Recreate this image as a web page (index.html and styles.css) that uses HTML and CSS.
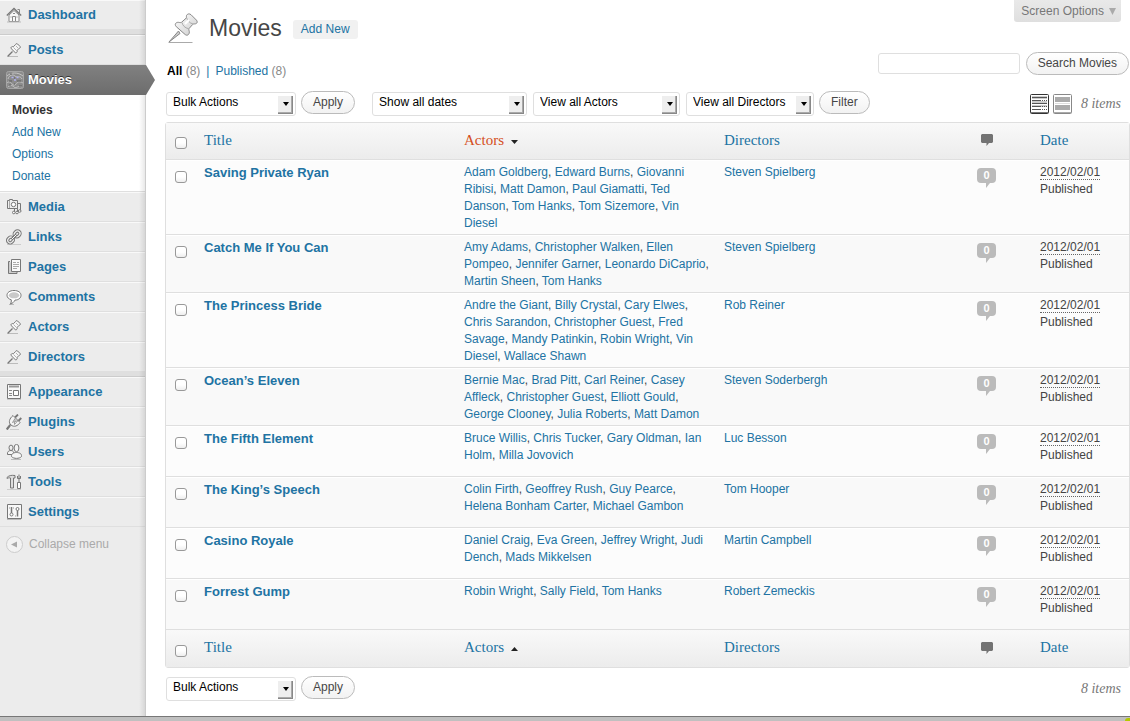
FILE: index.html
```html
<!DOCTYPE html>
<html lang="en">
<head>
<meta charset="utf-8">
<title>Movies</title>
<link rel="stylesheet" href="styles.css">
</head>
<body>
<svg class="defs" aria-hidden="true">
  <defs>
    <linearGradient id="metal" x1="0" y1="0" x2="1" y2="1"><stop offset="0" stop-color="#fff"/><stop offset="1" stop-color="#ccc"/></linearGradient>
    <symbol id="pin" viewBox="0 0 30 30">
      <path d="M.5 29.500h24" stroke="#aaa" stroke-width="1"/>
      <path d="M10.500 18 1 29l11-8.500z" fill="#ccc" stroke="#888"/>
      <path d="M18.500 2.500c1-2 3-2 4.500-.8l5.500 5.500c1.200 1.500.8 3.200-1 3.600-1.200.3-2-.2-3 .8l-3.500 4c-.6 1 .6 2.500.3 4.200-.5 2.300-2.500 3.200-4.300 1.600L8.300 13.700c-1.700-1.700-1.200-3.800 1-4.300 1.700-.3 3.200.6 4.200-.1l4.500-4c.8-.8.2-1.600.5-2.800z" fill="url(#metal)" stroke="#888"/>
      <path d="M14 9.500c.5 3 3 5.500 6.500 6.200M18.500 4.500c1 3 3 5.500 6.500 6.500" fill="none" stroke="#aaa"/>
      <path d="m17 11 4-4" stroke="#fff" stroke-width="2"/>
    </symbol>
    <symbol id="pin-small" viewBox="0 0 14 14">
      <path d="M0 13.500h11" stroke="#bbb"/>
      <path d="M5.500 8.500 .8 13.200" stroke="#777" stroke-width="1.300"/>
      <path d="M8.600 1.500c.3-1 1.300-1.200 2-.5l2.500 2.500c.6.7.2 1.600-.8 1.700L10.200 7.300c.3 1.500-.5 3-1.900 2.400L4.100 5.500c-.6-1.400.9-2.200 2.400-1.900z" fill="#f6f6f6" stroke="#777"/>
      <path d="M6.500 4.500 9.500 7.500M9 3l2 2" stroke="#999" stroke-width=".7"/>
    </symbol>
    <symbol id="bubble" viewBox="0 0 12 12"><path d="M1 0h10l1 1v7l-1 1H8l-2.500 3V9H1L0 8V1z" fill="#737373"/></symbol>
  </defs>
</svg>
<div class="page">
  <nav class="menu" aria-label="Main menu">
    <ul class="menu-list">
      <li class="item"><a href="#"><svg class="icon" viewBox="0 0 16 16"><path d="M3 8v6.500h10V8L8 3.500z" fill="#f8f8f8" stroke="#888"/><path d="M.8 8.500 8 1.500l7.200 7" fill="none" stroke="#777" stroke-width="1.300"/><path d="M11.500 2.500h2v4" fill="none" stroke="#888"/><path d="M6.500 14.500v-5h3v5M4.500 10h1M10.500 10h1M7 6.500h2" fill="none" stroke="#888"/><path d="M1 15h14" stroke="#bbb"/></svg>Dashboard</a></li>
      <li class="separator"></li>
      <li class="item"><a href="#"><svg class="icon small"><use href="#pin-small"/></svg>Posts</a></li>
      <li class="item current"><a href="#"><svg class="icon movie" viewBox="0 0 18 18"><rect x=".5" y=".5" width="17" height="17" rx="2" fill="#8c8c8c" stroke="#a5a5a5"/><path d="M1 5c4-4 11-4 16 0M2 8c1-4 5-5 7-3s5-1 7 3M1 12c2-2 4-1 5 1s4 1 5-1 4-1 6 0M2 16c2-2 4-2 6 0s5-2 8 0" fill="none" stroke="#c4c4c4"/><path d="M5.500 6.500h2M10.500 6.500h2M8 9h2" stroke="#b0b0f0" stroke-width="1.500"/><path d="M3 10h3M11 10h4M3 14h2M8 13h1M13 15h3M4 3h2M8 7h1" stroke="#5e5e5e"/></svg>Movies</a>
        <ul class="submenu">
          <li><a class="active" href="#">Movies</a></li>
          <li><a href="#">Add New</a></li>
          <li><a href="#">Options</a></li>
          <li><a href="#">Donate</a></li>
        </ul>
      </li>
      <li class="item"><a href="#"><svg class="icon" viewBox="0 0 16 16"><path d="M1.500 1.500h2v-1h3v1h5v8h-10z" fill="#eee" stroke="#777"/><path d="M3.500 2v7" stroke="#aaa"/><circle cx="7.500" cy="5.500" r="2.200" fill="#fff" stroke="#777"/><path d="M8.500 13.500V9.500h3v4M11.500 4.500h3v8" fill="none" stroke="#777"/><circle cx="7.800" cy="13.500" r="1.300" fill="#fff" stroke="#777"/><circle cx="11" cy="13.500" r="1.300" fill="#fff" stroke="#777"/><circle cx="13.700" cy="12" r="1.300" fill="#fff" stroke="#777"/></svg>Media</a></li>
      <li class="item"><a href="#"><svg class="icon" viewBox="0 0 16 16"><path d="M1 15.500h14" stroke="#ccc"/><g fill="none" stroke="#777" stroke-width="3.400"><rect x="8.500" y="1.800" width="5" height="6" rx="2.500" transform="rotate(45 11 5)"/><rect x="2" y="8" width="5" height="6" rx="2.500" transform="rotate(45 4.500 11)"/></g><g fill="none" stroke="#eee" stroke-width="1.300"><rect x="8.500" y="1.800" width="5" height="6" rx="2.500" transform="rotate(45 11 5)"/><rect x="2" y="8" width="5" height="6" rx="2.500" transform="rotate(45 4.500 11)"/></g><path d="m5.500 10.500 5-5" stroke="#777" stroke-width="2.600"/><path d="m5.500 10.500 5-5" stroke="#fff"/></svg>Links</a></li>
      <li class="item"><a href="#"><svg class="icon" viewBox="0 0 16 16"><path d="M4 2.500H2.500v12H11V13" fill="#ccc" stroke="#777"/><path d="M5.500.5h9v12h-9z" fill="#fafafa" stroke="#777"/><path d="M7 3.500h3M11 3.500h2M7 5.500h6M7 7.500h6M7 9.500h4" stroke="#aaa"/></svg>Pages</a></li>
      <li class="item"><a href="#"><svg class="icon" viewBox="0 0 16 16"><path d="M3 15.500h5" stroke="#bbb"/><path d="M8 1.500c4.300 0 7 2 7 4.800s-2.700 4.800-6 4.800c-1 1.900-2.500 3.300-4.500 3.900.7-1.200 1-2.700.8-4.200C2.700 10 1 8.500 1 6.300c0-2.800 2.700-4.800 7-4.800z" fill="#fff" stroke="#777"/><ellipse cx="8" cy="6.300" rx="5.200" ry="3" fill="#c9c9c9"/></svg>Comments</a></li>
      <li class="item"><a href="#"><svg class="icon small"><use href="#pin-small"/></svg>Actors</a></li>
      <li class="item"><a href="#"><svg class="icon small"><use href="#pin-small"/></svg>Directors</a></li>
      <li class="separator"></li>
      <li class="item"><a href="#"><svg class="icon" viewBox="0 0 16 16"><path d="M1.500.5h13v14h-13z" fill="#f8f8f8" stroke="#777"/><path d="M3 2.500h10" stroke="#999" stroke-width="2"/><path d="M7.500 6.500h5v5h-5z" fill="#fff" stroke="#777"/><path d="M3 6.500h3M3 9.500h3M3 11.500h3" stroke="#888"/><path d="M1 15.500h14" stroke="#ccc"/></svg>Appearance</a></li>
      <li class="item"><a href="#"><svg class="icon" viewBox="0 0 16 16"><path d="M4.500 11C3 11.500 3.500 13 2.200 13.500L.8 15.500" fill="none" stroke="#777" stroke-width="2.200"/><path d="m9 3.500 3-3M12.300 7l3-3" stroke="#777" stroke-width="1.800"/><path d="M7 1.500 14 8.500C12 12 8 13.500 5 11S3.500 4.500 7 1.500z" fill="#f4f4f4" stroke="#777"/><path d="M6.500 8.500 9 4.500v3l3-1-3.500 4v-3z" stroke="#888" stroke-width=".8" fill="none"/><path d="M4 15.500h9" stroke="#ccc"/></svg>Plugins</a></li>
      <li class="item"><a href="#"><svg class="icon" viewBox="0 0 16 16"><ellipse cx="5" cy="3.800" rx="2" ry="2.700" fill="#eee" stroke="#777"/><path d="M1.500 10.500C1 7.500 3 6.500 5 6.500s3 1.500 3 4z" fill="#f5f5f5" stroke="#777"/><ellipse cx="10.500" cy="4" rx="2.400" ry="3.700" fill="#f4f4f4" stroke="#777"/><path d="M5.500 12.500c-.5-2.700 2-4 5-4s5.700 1.500 5 4c-2 2.500-8 2.500-10 0z" fill="#f5f5f5" stroke="#777"/><path d="M5 15.500h10" stroke="#bbb"/></svg>Users</a></li>
      <li class="item"><a href="#"><svg class="icon" viewBox="0 0 16 16"><path d="M1 3.500C3 1.500 5 1 9 1.500v2.500H7.500v10h-3V4C3 3.500 2 4 1 4.500z" fill="#ddd" stroke="#777"/><path d="M13 .5v8M11.500 2v2.500h3V2" fill="none" stroke="#777"/><path d="M11.500 8.500h3v6h-3z" fill="#fff" stroke="#777"/><path d="M1 15.500h14" stroke="#ccc"/></svg>Tools</a></li>
      <li class="item"><a href="#"><svg class="icon" viewBox="0 0 16 16"><path d="M1.500.5h14v14h-14z" fill="#f8f8f8" stroke="#777"/><path d="M5.500 3v6" stroke="#777" stroke-width="1.500"/><circle cx="5.500" cy="10.500" r="1.500" fill="#fff" stroke="#777"/><circle cx="11.500" cy="5" r="1.500" fill="#fff" stroke="#777"/><path d="M11.500 6.500v6" stroke="#777" stroke-width="1.500"/><path d="M3 4h1M7 4h1M9 12h1" stroke="#999"/><path d="M1 15.500h14" stroke="#bbb"/></svg>Settings</a></li>
    </ul>
    <button class="collapse" type="button"><svg class="icon collapse-icon" viewBox="0 0 17 17"><circle cx="8.500" cy="8.500" r="8" fill="#f3f3f3" stroke="#ccc"/><path d="M11 5.500v6l-6-3z" fill="#aaa"/></svg>Collapse menu</button>
  </nav>

  <main class="content">
    <header class="heading">
      <svg class="heading-icon"><use href="#pin"/></svg>
      <h1>Movies</h1>
      <a class="add-new" href="#">Add New</a>
      <button class="screen-options" type="button">Screen Options <svg width="7" height="7" viewBox="0 0 7 7"><path d="M0 0h7L3.500 7z" fill="#aaa"/></svg></button>
    </header>

    <div class="views-row">
      <ul class="views">
        <li><a class="active" href="#">All</a> <span>(8)</span></li>
        <li class="bar">|</li>
        <li><a href="#">Published</a> <span>(8)</span></li>
      </ul>
      <form class="search">
        <input type="text" aria-label="Search Movies">
        <button class="button" type="button">Search Movies</button>
      </form>
    </div>

    <div class="tablenav">
      <span class="select bulk"><select aria-label="Bulk Actions"><option>Bulk Actions</option></select></span>
      <button class="button apply" type="button">Apply</button>
      <span class="select dates"><select aria-label="Dates"><option>Show all dates</option></select></span>
      <span class="select actors"><select aria-label="Actors"><option>View all Actors</option></select></span>
      <span class="select directors"><select aria-label="Directors"><option>View all Directors</option></select></span>
      <button class="button filter" type="button">Filter</button>
      <div class="nav-end">
        <button class="mode" type="button" aria-label="List view"><svg viewBox="0 0 19 20"><rect x=".5" y=".5" width="18" height="19" rx="1" fill="#fff" stroke="#333"/><path d="M1 18.500h17" stroke="#777"/><path d="M2 2h15v3H2zM2 7h15v2H2zM2 11h15v2H2z" fill="#ccc"/><path d="M2 3.500h15M2 6.500h9M2 9.500h15M2 12.500h9M2 15.500h9" stroke="#555"/><path d="M12 6.500h5M12 12.500h5M12 15.500h5" stroke="#555" stroke-dasharray="1 1"/></svg></button>
        <button class="mode" type="button" aria-label="Excerpt view"><svg viewBox="0 0 19 20"><rect x=".5" y=".5" width="18" height="19" rx="1" fill="#fff" stroke="#888"/><path d="M1 18.500h17" stroke="#aaa"/><path d="M2 3h15v5H2zM2 11h15v5H2z" fill="#aaa"/><path d="M2 9.500h15" stroke="#ddd"/></svg></button>
        <span class="count">8 items</span>
      </div>
    </div>

    <table class="movies">
      <colgroup><col class="c-check"><col class="c-title"><col class="c-actors"><col><col class="c-comments"><col class="c-date"></colgroup>
      <thead>
        <tr><th class="check"><input type="checkbox" aria-label="Select all"></th><th><a href="#">Title</a></th><th><a class="sorted" href="#">Actors</a><svg class="sort" viewBox="0 0 7 4"><path d="M0 0h7L3.500 4z"/></svg></th><th><a href="#">Directors</a></th><th class="num"><svg class="head-bubble" role="img" aria-label="Comments"><use href="#bubble"/></svg></th><th><a href="#">Date</a></th></tr>
      </thead>
      <tbody>
        <tr><td class="check"><input type="checkbox" aria-label="Select Saving Private Ryan"></td><td><a class="title" href="#">Saving Private Ryan</a></td><td><a href="#">Adam Goldberg</a>, <a href="#">Edward Burns</a>, <a href="#">Giovanni Ribisi</a>, <a href="#">Matt Damon</a>, <a href="#">Paul Giamatti</a>, <a href="#">Ted Danson</a>, <a href="#">Tom Hanks</a>, <a href="#">Tom Sizemore</a>, <a href="#">Vin Diesel</a></td><td><a href="#">Steven Spielberg</a></td><td class="num"><a class="comments" href="#">0</a></td><td><abbr>2012/02/01</abbr><br>Published</td></tr>
        <tr><td class="check"><input type="checkbox" aria-label="Select Catch Me If You Can"></td><td><a class="title" href="#">Catch Me If You Can</a></td><td><a href="#">Amy Adams</a>, <a href="#">Christopher Walken</a>, <a href="#">Ellen Pompeo</a>, <a href="#">Jennifer Garner</a>, <a href="#">Leonardo DiCaprio</a>, <a href="#">Martin Sheen</a>, <a href="#">Tom Hanks</a></td><td><a href="#">Steven Spielberg</a></td><td class="num"><a class="comments" href="#">0</a></td><td><abbr>2012/02/01</abbr><br>Published</td></tr>
        <tr><td class="check"><input type="checkbox" aria-label="Select The Princess Bride"></td><td><a class="title" href="#">The Princess Bride</a></td><td><a href="#">Andre the Giant</a>, <a href="#">Billy Crystal</a>, <a href="#">Cary Elwes</a>, <a href="#">Chris Sarandon</a>, <a href="#">Christopher Guest</a>, <a href="#">Fred Savage</a>, <a href="#">Mandy Patinkin</a>, <a href="#">Robin Wright</a>, <a href="#">Vin Diesel</a>, <a href="#">Wallace Shawn</a></td><td><a href="#">Rob Reiner</a></td><td class="num"><a class="comments" href="#">0</a></td><td><abbr>2012/02/01</abbr><br>Published</td></tr>
        <tr><td class="check"><input type="checkbox" aria-label="Select Ocean’s Eleven"></td><td><a class="title" href="#">Ocean’s Eleven</a></td><td><a href="#">Bernie Mac</a>, <a href="#">Brad Pitt</a>, <a href="#">Carl Reiner</a>, <a href="#">Casey Affleck</a>, <a href="#">Christopher Guest</a>, <a href="#">Elliott Gould</a>, <a href="#">George Clooney</a>, <a href="#">Julia Roberts</a>, <a href="#">Matt Damon</a></td><td><a href="#">Steven Soderbergh</a></td><td class="num"><a class="comments" href="#">0</a></td><td><abbr>2012/02/01</abbr><br>Published</td></tr>
        <tr><td class="check"><input type="checkbox" aria-label="Select The Fifth Element"></td><td><a class="title" href="#">The Fifth Element</a></td><td><a href="#">Bruce Willis</a>, <a href="#">Chris Tucker</a>, <a href="#">Gary Oldman</a>, <a href="#">Ian Holm</a>, <a href="#">Milla Jovovich</a></td><td><a href="#">Luc Besson</a></td><td class="num"><a class="comments" href="#">0</a></td><td><abbr>2012/02/01</abbr><br>Published</td></tr>
        <tr><td class="check"><input type="checkbox" aria-label="Select The King’s Speech"></td><td><a class="title" href="#">The King’s Speech</a></td><td><a href="#">Colin Firth</a>, <a href="#">Geoffrey Rush</a>, <a href="#">Guy Pearce</a>, <a href="#">Helena Bonham Carter</a>, <a href="#">Michael Gambon</a></td><td><a href="#">Tom Hooper</a></td><td class="num"><a class="comments" href="#">0</a></td><td><abbr>2012/02/01</abbr><br>Published</td></tr>
        <tr><td class="check"><input type="checkbox" aria-label="Select Casino Royale"></td><td><a class="title" href="#">Casino Royale</a></td><td><a href="#">Daniel Craig</a>, <a href="#">Eva Green</a>, <a href="#">Jeffrey Wright</a>, <a href="#">Judi Dench</a>, <a href="#">Mads Mikkelsen</a></td><td><a href="#">Martin Campbell</a></td><td class="num"><a class="comments" href="#">0</a></td><td><abbr>2012/02/01</abbr><br>Published</td></tr>
        <tr><td class="check"><input type="checkbox" aria-label="Select Forrest Gump"></td><td><a class="title" href="#">Forrest Gump</a></td><td><a href="#">Robin Wright</a>, <a href="#">Sally Field</a>, <a href="#">Tom Hanks</a></td><td><a href="#">Robert Zemeckis</a></td><td class="num"><a class="comments" href="#">0</a></td><td><abbr>2012/02/01</abbr><br>Published</td></tr>
      </tbody>
      <tfoot>
        <tr><th class="check"><input type="checkbox" aria-label="Select all"></th><th><a href="#">Title</a></th><th><a href="#">Actors</a><svg class="sort" viewBox="0 0 7 4"><path d="M0 4h7L3.500 0z"/></svg></th><th><a href="#">Directors</a></th><th class="num"><svg class="head-bubble" role="img" aria-label="Comments"><use href="#bubble"/></svg></th><th><a href="#">Date</a></th></tr>
      </tfoot>
    </table>

    <div class="tablenav bottom">
      <span class="select bulk"><select aria-label="Bulk Actions"><option>Bulk Actions</option></select></span>
      <button class="button apply" type="button">Apply</button>
      <div class="nav-end"><span class="count">8 items</span></div>
    </div>
  </main>
</div>
<div class="statusbar"><span class="status-dot"></span></div>
</body>
</html>
```
FILE: styles.css
```css
* { box-sizing: border-box; }
body {
  margin: 0;
  min-height: 100vh;
  display: flex;
  flex-direction: column;
  background: #fff;
  color: #444;
  font: 12px/17px "Liberation Sans", Arial, sans-serif;
}
a { color: #2173a3; text-decoration: none; }
ul { list-style: none; margin: 0; padding: 0; }
button, input, select { font: inherit; color: inherit; margin: 0; }
button { cursor: pointer; }
svg { display: block; flex: none; }
.defs { position: absolute; width: 0; height: 0; }
.page { flex: 1; display: flex; }

/* Sidebar */
.menu {
  position: relative;
  flex: none;
  width: 146px;
  background: #ececec;
  border-right: 1px solid #ccc;
}
.menu::after {
  content: "";
  position: absolute;
  inset: 0 0 0 auto;
  width: 6px;
  background: linear-gradient(to right, rgba(0,0,0,0), rgba(0,0,0,.09));
  pointer-events: none;
}
.item > a {
  display: flex;
  align-items: center;
  gap: 6px;
  height: 30px;
  padding: 0 0 2px 6px;
  border-top: 1px solid #f9f9f9;
  border-bottom: 1px solid #dfdfdf;
  font-size: 13px;
  font-weight: bold;
}
.icon { width: 16px; height: 16px; margin-top: 2px; }
.icon.small { width: 14px; height: 14px; margin-left: 1px; margin-right: 1px; }
.separator {
  height: 5px;
  background: #dfdfdf;
  border-bottom: 1px solid #ccc;
}
.item.current > a {
  position: relative;
  z-index: 1;
  gap: 4px;
  border-color: #808080 #6d6d6d #6d6d6d;
  background: linear-gradient(#808080, #6d6d6d);
  color: #fff;
  text-shadow: 0 -1px 0 #333;
}
.item.current > a::after {
  content: "";
  position: absolute;
  top: -1px;
  left: 100%;
  width: 10px;
  height: 30px;
  background: linear-gradient(#808080, #6d6d6d);
  clip-path: polygon(0 0, 10% 0, 100% 50%, 10% 100%, 0 100%);
}
.icon.movie { width: 18px; height: 18px; }
.submenu {
  padding: 4px 0;
  background: #fff;
  border-bottom: 1px solid #dfdfdf;
}
.submenu a { display: block; padding-left: 12px; line-height: 22px; }
.submenu .active { color: #333; font-weight: bold; }
.collapse {
  display: flex;
  align-items: center;
  gap: 6px;
  height: 34px;
  padding: 0 0 0 6px;
  border: 0;
  background: none;
  color: #aaa;
}
.icon.collapse-icon { width: 17px; height: 17px; margin-top: 0; }

/* Heading */
.content { flex: 1; min-width: 0; padding-left: 19px; }
.heading { display: flex; align-items: flex-start; height: 43px; padding-left: 3px; }
.heading-icon { width: 30px; height: 30px; margin-top: 13px; }
h1 {
  margin: 13px 11px 0;
  font-size: 23px;
  font-weight: normal;
  line-height: 30px;
  color: #464646;
}
.add-new {
  margin-top: 20px;
  padding: 0 8px;
  line-height: 19px;
  border-radius: 3px;
  background: #f1f1f1;
}
.screen-options {
  display: flex;
  align-items: center;
  gap: 5px;
  height: 22px;
  margin: 0 9px 0 auto;
  padding: 0 5px 0 7px;
  border: 0;
  border-radius: 0 0 3px 3px;
  background: linear-gradient(#e9e9e9, #dfdfdf);
  color: #777;
}

/* View links and search */
.views-row {
  display: flex;
  align-items: center;
  justify-content: space-between;
  margin-top: 9px;
}
.views { display: flex; gap: 6px; padding: 16px 0 0 2px; height: 23px; align-items: center; }
.views span { color: #888; }
.views .active { color: #000; font-weight: bold; }
.views .bar { color: #2173a3; }
.search { display: flex; align-items: center; gap: 6px; padding-right: 1px; }
.search input {
  width: 142px;
  height: 21px;
  border: 1px solid #dfdfdf;
  border-radius: 3px;
  background: #fff;
}
.button {
  height: 23px;
  padding: 0 11px;
  border: 1px solid #bbb;
  border-radius: 12px;
  background: linear-gradient(#fff, #f2f2f2);
  color: #464646;
  line-height: 19px;
  white-space: nowrap;
}

/* Table toolbar */
.tablenav { display: flex; align-items: flex-start; margin: 16px 0 6px; padding-left: 1px; }
.tablenav.bottom { margin: 8px 0 15px; }
.select { position: relative; margin-top: 1px; }
.select select {
  display: block;
  width: 100%;
  height: 24px;
  padding: 0 20px 4px 6px;
  border: 1px solid #dfdfdf;
  border-radius: 3px;
  background: #fff;
  color: #000;
  appearance: none;
}
.select::before {
  content: "";
  position: absolute;
  top: 4px;
  right: 3px;
  width: 14px;
  height: 17px;
  background: #eee;
  border: solid #888;
  border-width: 0 1px 1px 0;
  box-shadow: inset -1px -1px #aaa;
  pointer-events: none;
}
.select::after {
  content: "";
  position: absolute;
  top: 10px;
  right: 7px;
  border: solid transparent;
  border-width: 4px 3px 0;
  border-top-color: #000;
  pointer-events: none;
}
.bulk { width: 130px; }
.apply { margin: 0 17px 0 5px; }
.dates { width: 155px; }
.actors { width: 147px; margin-left: 6px; }
.directors { width: 128px; margin-left: 6px; }
.filter { margin-left: 5px; }
.nav-end { display: flex; align-items: center; height: 25px; margin-left: auto; padding-right: 9px; }
.mode { padding: 0; border: 0; background: none; margin-right: 4px; }
.mode svg { width: 19px; height: 20px; }
.count { margin-left: 5px; color: #777; font: italic 14px/17px "Liberation Serif", serif; }

/* Movies table */
.movies {
  width: 100%;
  table-layout: fixed;
  border: 1px solid #dfdfdf;
  border-radius: 3px;
  border-spacing: 0;
  background: #f9f9f9;
}
.c-check { width: 31px; }
.c-title, .c-actors { width: 27%; }
.c-comments { width: 93px; }
.c-date { width: 96px; }
.movies th {
  height: 37px;
  padding: 0 7px 2px;
  background: linear-gradient(#f9f9f9, #ececec);
  text-align: left;
  font: 15px/17px "Liberation Serif", serif;
}
.movies thead th { border-bottom: 1px solid #dfdfdf; }
.movies .sorted { color: #d54e21; }
.sort { display: inline-block; width: 7px; height: 4px; margin-left: 7px; fill: #222; vertical-align: 1px; }
.movies td {
  height: 51px;
  padding: 3px 7px 2px;
  border-top: 1px solid #fff;
  border-bottom: 1px solid #dfdfdf;
  vertical-align: top;
}
.movies tbody tr:nth-child(odd) { background: #fcfcfc; }
.movies td.check { padding: 10px 0 0 9px; }
.movies th.check { padding: 4px 0 0 9px; }
.check input {
  display: block;
  width: 12px;
  height: 12px;
  appearance: none;
  border: 1px solid #999;
  border-radius: 3px;
  background: linear-gradient(#fff 50%, #eee);
}
.title { font-size: 13px; font-weight: bold; }
.head-bubble { width: 12px; height: 12px; margin: 0 auto; }
.comments {
  position: relative;
  display: block;
  width: 19px;
  height: 15px;
  margin: 4px auto 0;
  border-radius: 4px;
  background: #bbb;
  color: #fff;
  font-size: 11px;
  font-weight: bold;
  line-height: 15px;
  text-align: center;
}
.comments::after {
  content: "";
  position: absolute;
  top: 15px;
  left: 9px;
  border: solid transparent;
  border-width: 5px 4px 0 0;
  border-top-color: #bbb;
}
abbr { border-bottom: 1px dotted #666; }

.statusbar {
  display: flex;
  justify-content: flex-end;
  align-items: flex-end;
  height: 5px;
  border-top: 1px solid #777;
  background: #c0c0c0;
}
.status-dot { width: 5px; height: 3px; border-radius: 3px 0 0 0; background: #b5c800; }
```
